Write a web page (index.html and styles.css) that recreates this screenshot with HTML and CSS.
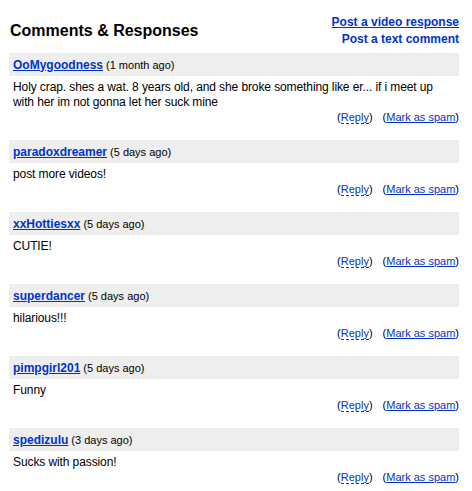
FILE: index.html
```html
<!DOCTYPE html>
<html>
<head>
<meta charset="utf-8">
<link rel="stylesheet" href="styles.css">
</head>
<body>
<div class="page">
  <div class="header">
    <h2 class="title">Comments &amp; Responses</h2>
    <div class="post-links">
      <a class="post-video" href="#">Post a video response</a>
      <a class="post-text" href="#">Post a text comment</a>
    </div>
  </div>

  <div class="comment">
    <div class="bar"><a class="user" href="#">OoMygoodness</a><span class="age">(1 month ago)</span></div>
    <div class="text">Holy crap. shes a wat. 8 years old, and she broke something like er... if i meet up with her im not gonna let her suck mine</div>
    <div class="actions">(<a class="reply" href="#">Reply</a>)<span class="spam">(<a href="#">Mark as spam</a>)</span></div>
  </div>

  <div class="comment">
    <div class="bar"><a class="user" href="#">paradoxdreamer</a><span class="age">(5 days ago)</span></div>
    <div class="text">post more videos!</div>
    <div class="actions">(<a class="reply" href="#">Reply</a>)<span class="spam">(<a href="#">Mark as spam</a>)</span></div>
  </div>

  <div class="comment">
    <div class="bar"><a class="user" href="#">xxHottiesxx</a><span class="age">(5 days ago)</span></div>
    <div class="text">CUTIE!</div>
    <div class="actions">(<a class="reply" href="#">Reply</a>)<span class="spam">(<a href="#">Mark as spam</a>)</span></div>
  </div>

  <div class="comment">
    <div class="bar"><a class="user" href="#">superdancer</a><span class="age">(5 days ago)</span></div>
    <div class="text">hilarious!!!</div>
    <div class="actions">(<a class="reply" href="#">Reply</a>)<span class="spam">(<a href="#">Mark as spam</a>)</span></div>
  </div>

  <div class="comment">
    <div class="bar"><a class="user" href="#">pimpgirl201</a><span class="age">(5 days ago)</span></div>
    <div class="text">Funny</div>
    <div class="actions">(<a class="reply" href="#">Reply</a>)<span class="spam">(<a href="#">Mark as spam</a>)</span></div>
  </div>

  <div class="comment">
    <div class="bar"><a class="user" href="#">spedizulu</a><span class="age">(3 days ago)</span></div>
    <div class="text">Sucks with passion!</div>
    <div class="actions">(<a class="reply" href="#">Reply</a>)<span class="spam">(<a href="#">Mark as spam</a>)</span></div>
  </div>
</div>
</body>
</html>
```
FILE: styles.css
```css
html, body {
  margin: 0;
  padding: 0;
  background: #fff;
}
body {
  font-family: "Liberation Sans", Arial, sans-serif;
  color: #000;
}
.page {
  width: 450px;
  padding-left: 9px;
}
.header {
  display: flex;
  justify-content: space-between;
  align-items: flex-start;
  height: 53px;
}
.title {
  margin: 0;
  padding: 21px 0 0 1px;
  font-size: 16px;
  font-weight: bold;
  line-height: 19px;
}
.post-links {
  display: flex;
  flex-direction: column;
  align-items: flex-end;
  padding-top: 14px;
  font-size: 12px;
  font-weight: bold;
  line-height: 17px;
}
.post-links a {
  color: #0033cc;
}
.post-links .post-text {
  text-decoration: none;
}
.comment {
  margin-bottom: 16px;
}
.bar {
  background: #eeeeee;
  height: 23px;
  display: flex;
  align-items: center;
  padding-left: 4px;
  font-size: 11px;
}
.user {
  font-size: 12px;
  font-weight: bold;
  color: #0033cc;
  margin-right: 3px;
}
.age {
  color: #000;
}
.text {
  padding: 4px 4px 0 4px;
  font-size: 12px;
  line-height: 15px;
  letter-spacing: -0.1px;
}
.actions {
  text-align: right;
  font-size: 11px;
  line-height: 14px;
  color: #000;
}
.actions a {
  color: #0033cc;
}
.actions .reply {
  text-decoration: none;
  border-bottom: 1px dashed #0033cc;
}
.spam {
  margin-left: 10px;
}
```
